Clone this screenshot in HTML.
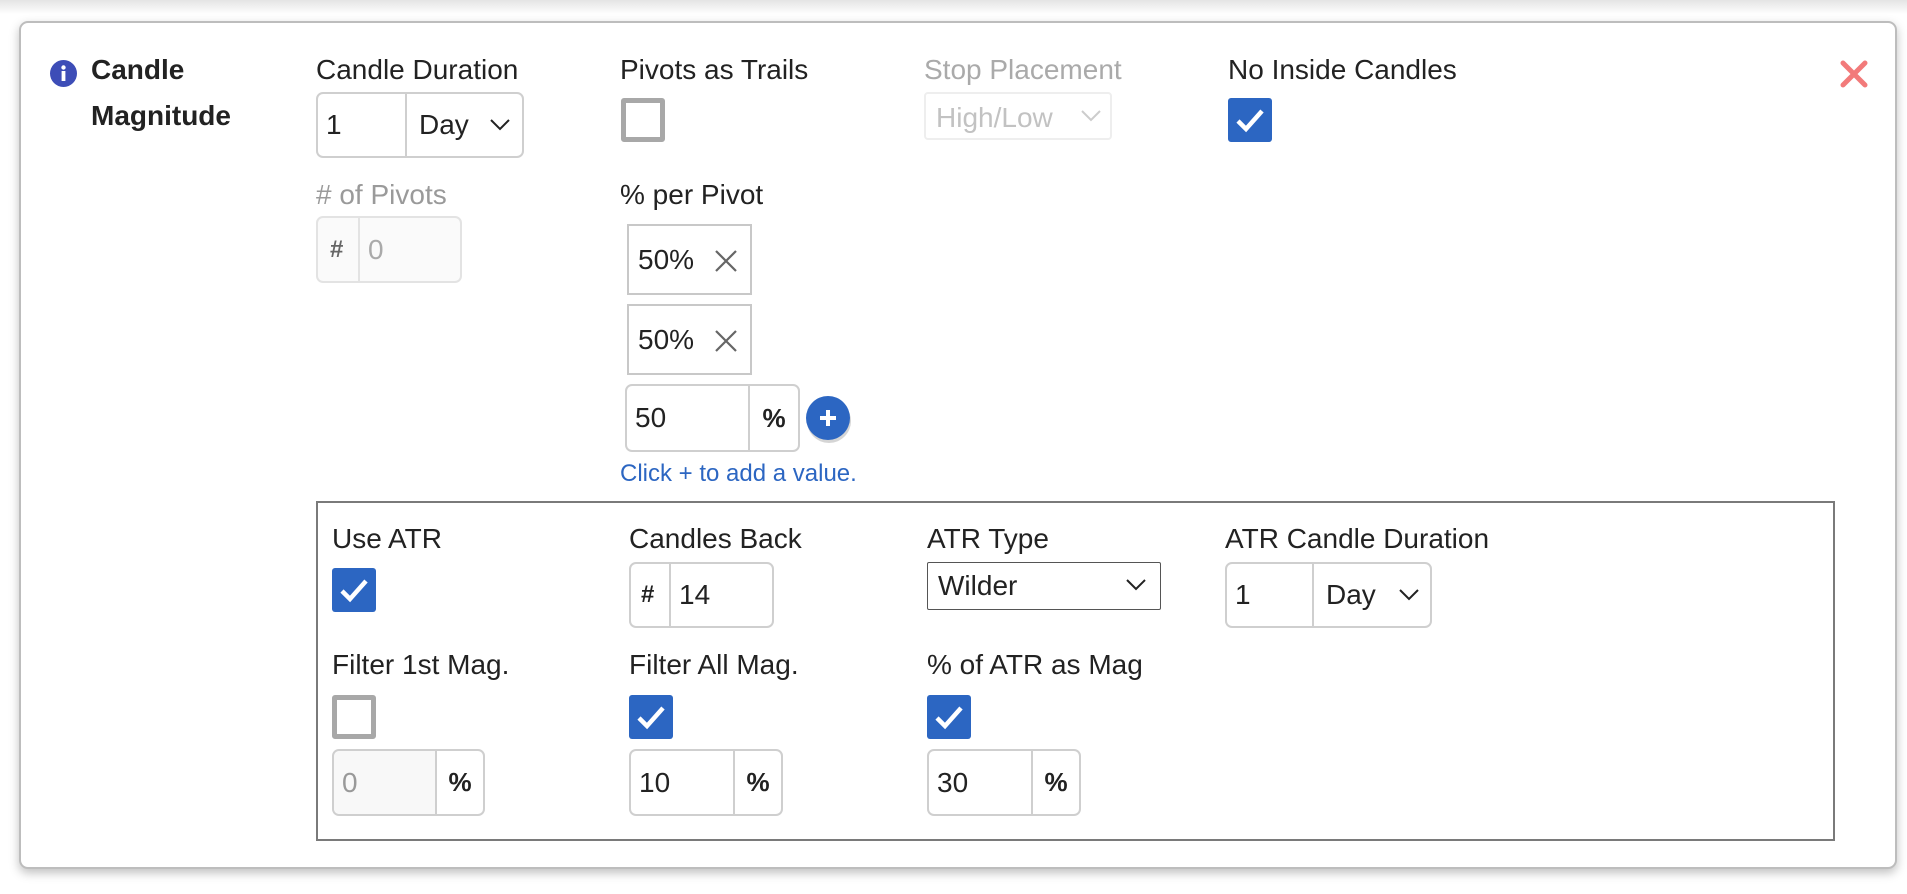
<!DOCTYPE html>
<html><head><meta charset="utf-8"><style>
*{box-sizing:border-box;margin:0;padding:0}
body{width:1907px;height:894px;background:#fff;font-family:"Liberation Sans",sans-serif;color:#222;position:relative;overflow:hidden}
.top{position:absolute;left:0;top:0;width:1907px;height:14px;background:linear-gradient(#e4e4e4,#fff)}
.card{position:absolute;left:19px;top:21px;width:1878px;height:848px;border:2px solid #bdbdbd;border-radius:9px;background:#fff;box-shadow:0 4px 10px rgba(0,0,0,.25)}
.a{position:absolute}
.lbl{position:absolute;font-size:28px;line-height:34px;white-space:nowrap}
.gray{color:#9a9a9a}
.inp{position:absolute;border:2px solid #cfcfcf;border-radius:7px;background:#fff;font-size:28px}
.seg{position:absolute;top:0;bottom:0;display:flex;align-items:center}
.cb{position:absolute;width:44px;height:44px;border-radius:3px}
.cb.on{background:#2c66c2}
.cb.off{border:5px solid #a8a8a8;background:#fff;border-radius:3px}
.chip{position:absolute;border:2px solid #c8c8c8;font-size:28px;display:flex;align-items:center;padding-left:9px}
</style></head><body>
<div class="top"></div>
<div class="card"></div>

<svg class="a" style="left:50px;top:60px" width="27" height="27" viewBox="0 0 27 27"><circle cx="13.5" cy="13.5" r="13.5" fill="#3d4db7"/><rect x="11.6" y="11" width="3.8" height="10" fill="#fff"/><circle cx="13.5" cy="7.5" r="2.2" fill="#fff"/></svg>
<div class="lbl" style="left:91px;top:47px;font-weight:bold;line-height:46px">Candle<br>Magnitude</div>

<svg class="a" style="left:1839px;top:59px" width="30" height="30" viewBox="0 0 30 30"><path d="M4 4L26 26M26 4L4 26" stroke="#f27a7a" stroke-width="5" stroke-linecap="round"/></svg>

<!-- col1 -->
<div class="lbl" style="left:316px;top:53px">Candle Duration</div>
<div class="inp" style="left:316px;top:92px;width:208px;height:66px">
 <div class="seg" style="left:8px">1</div>
 <div class="seg" style="left:87px;border-left:2px solid #cfcfcf;padding-left:12px;width:117px">Day</div>
 <svg class="a" style="left:172px;top:25px" width="20" height="12"><path d="M1 1L10 10L19 1" stroke="#222" stroke-width="2" fill="none"/></svg>
</div>
<div class="lbl gray" style="left:316px;top:178px">#&nbsp;of Pivots</div>
<div class="inp" style="left:316px;top:216px;width:146px;height:67px;background:#fafafa;border-color:#e3e3e3">
 <div class="seg" style="left:12px;color:#666;font-size:24px;font-weight:bold">#</div>
 <div class="seg" style="left:40px;border-left:2px solid #e3e3e3;padding-left:8px;color:#aaa">0</div>
</div>

<!-- col2 -->
<div class="lbl" style="left:620px;top:53px">Pivots as Trails</div>
<div class="cb off" style="left:621px;top:98px"></div>
<div class="lbl" style="left:620px;top:178px">% per Pivot</div>
<div class="chip" style="left:627px;top:224px;width:125px;height:71px">50%<svg class="a" style="left:86px;top:24px" width="22" height="22"><path d="M1 1L21 21M21 1L1 21" stroke="#666" stroke-width="2.2"/></svg></div>
<div class="chip" style="left:627px;top:304px;width:125px;height:71px">50%<svg class="a" style="left:86px;top:24px" width="22" height="22"><path d="M1 1L21 21M21 1L1 21" stroke="#666" stroke-width="2.2"/></svg></div>
<div class="inp" style="left:625px;top:384px;width:175px;height:68px">
 <div class="seg" style="left:8px">50</div>
 <div class="seg" style="left:121px;border-left:2px solid #cfcfcf;width:50px;justify-content:center;font-weight:bold;font-size:26px">%</div>
</div>
<svg class="a" style="left:803px;top:393px" width="52" height="54"><circle cx="25" cy="25" r="22" fill="#888" opacity=".35" transform="translate(1,3)"/><circle cx="25" cy="25" r="22" fill="#2c66c2"/><path d="M25 17V33M17 25H33" stroke="#fff" stroke-width="4"/></svg>
<div class="lbl" style="left:620px;top:457px;font-size:24px;color:#2c66c2">Click + to add a value.</div>

<!-- col3 -->
<div class="lbl gray" style="left:924px;top:53px;color:#aaa">Stop Placement</div>
<div class="inp" style="left:924px;top:92px;width:188px;height:48px;border-color:#eee;border-radius:4px;color:#c2c2c2">
 <div class="seg" style="left:10px;top:3px">High/Low</div>
 <svg class="a" style="left:155px;top:16px" width="20" height="12"><path d="M1 1L10 10L19 1" stroke="#ccc" stroke-width="2" fill="none"/></svg>
</div>

<!-- col4 -->
<div class="lbl" style="left:1228px;top:53px">No Inside Candles</div>
<div class="cb on" style="left:1228px;top:98px"><svg width="44" height="44"><path d="M10 23L18 31L34 13" stroke="#fff" stroke-width="4.5" fill="none"/></svg></div>

<!-- inner box -->
<div class="a" style="left:316px;top:501px;width:1519px;height:340px;border:2px solid #7a7a7a"></div>

<div class="lbl" style="left:332px;top:522px">Use ATR</div>
<div class="cb on" style="left:332px;top:568px"><svg width="44" height="44"><path d="M10 23L18 31L34 13" stroke="#fff" stroke-width="4.5" fill="none"/></svg></div>

<div class="lbl" style="left:629px;top:522px">Candles Back</div>
<div class="inp" style="left:629px;top:562px;width:145px;height:66px">
 <div class="seg" style="left:10px;font-weight:bold;font-size:24px">#</div>
 <div class="seg" style="left:38px;border-left:2px solid #cfcfcf;padding-left:8px">14</div>
</div>

<div class="lbl" style="left:927px;top:522px">ATR Type</div>
<div class="inp" style="left:927px;top:562px;width:234px;height:48px;border:1.5px solid #555;border-radius:2px">
 <div class="seg" style="left:10px">Wilder</div>
 <svg class="a" style="left:198px;top:16px" width="20" height="12"><path d="M1 1L10 10L19 1" stroke="#222" stroke-width="2" fill="none"/></svg>
</div>

<div class="lbl" style="left:1225px;top:522px">ATR Candle Duration</div>
<div class="inp" style="left:1225px;top:562px;width:207px;height:66px">
 <div class="seg" style="left:8px">1</div>
 <div class="seg" style="left:85px;border-left:2px solid #cfcfcf;padding-left:12px;width:118px">Day</div>
 <svg class="a" style="left:172px;top:25px" width="20" height="12"><path d="M1 1L10 10L19 1" stroke="#222" stroke-width="2" fill="none"/></svg>
</div>

<div class="lbl" style="left:332px;top:648px">Filter 1st Mag.</div>
<div class="cb off" style="left:332px;top:695px"></div>
<div class="inp" style="left:332px;top:749px;width:153px;height:67px">
 <div class="seg" style="left:0;width:101px;background:#f8f8f8;padding-left:8px;color:#999;border-radius:6px 0 0 6px">0</div>
 <div class="seg" style="left:101px;border-left:2px solid #cfcfcf;width:48px;justify-content:center;font-weight:bold;font-size:26px">%</div>
</div>

<div class="lbl" style="left:629px;top:648px">Filter All Mag.</div>
<div class="cb on" style="left:629px;top:695px"><svg width="44" height="44"><path d="M10 23L18 31L34 13" stroke="#fff" stroke-width="4.5" fill="none"/></svg></div>
<div class="inp" style="left:629px;top:749px;width:154px;height:67px">
 <div class="seg" style="left:8px">10</div>
 <div class="seg" style="left:102px;border-left:2px solid #cfcfcf;width:48px;justify-content:center;font-weight:bold;font-size:26px">%</div>
</div>

<div class="lbl" style="left:927px;top:648px">% of ATR as Mag</div>
<div class="cb on" style="left:927px;top:695px"><svg width="44" height="44"><path d="M10 23L18 31L34 13" stroke="#fff" stroke-width="4.5" fill="none"/></svg></div>
<div class="inp" style="left:927px;top:749px;width:154px;height:67px">
 <div class="seg" style="left:8px">30</div>
 <div class="seg" style="left:102px;border-left:2px solid #cfcfcf;width:48px;justify-content:center;font-weight:bold;font-size:26px">%</div>
</div>
</body></html>
